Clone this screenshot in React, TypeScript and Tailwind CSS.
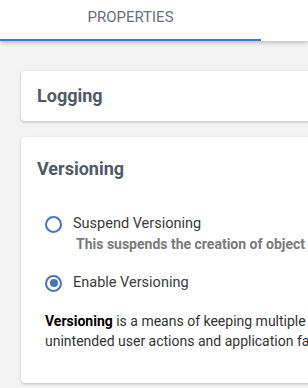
const options = [
  {
    label: 'Suspend Versioning',
    hint: 'This suspends the creation of object versions for all objects within the bucket.',
    checked: false,
  },
  {
    label: 'Enable Versioning',
    hint: '',
    checked: true,
  },
];

function Radio({ checked }: { checked: boolean }) {
  return (
    <span className="flex h-[17px] w-[17px] flex-shrink-0 items-center justify-center rounded-full border-2 border-[#4673c2]">
      {checked && <span className="h-[8px] w-[8px] rounded-full bg-[#4673c2]"></span>}
    </span>
  );
}

export default function App() {
  return (
    <div className="h-[388px] w-[308px] overflow-hidden bg-[#f3f3f3] font-['Roboto','Liberation_Sans',sans-serif]">
      <div className="relative z-10 flex h-[41px] w-full bg-white shadow-[0_2px_4px_rgba(0,0,0,0.22)]">
        <div className="w-[261px] border-b-2 border-[#4673c2] pt-[7px] text-center text-[15px] leading-5 text-[#6b7178]">
          PROPERTIES
        </div>
      </div>

      <div className="w-[560px] pl-[21px] pt-[30px]">
        <div className="h-[50px] rounded-[4px] bg-white px-4 pt-[13px] shadow-[0_1px_3px_rgba(0,0,0,0.22)]">
          <h3 className="text-[18px] font-bold leading-6 text-[#4f5a66]">Logging</h3>
        </div>

        <div className="mt-4 rounded-[4px] bg-white px-4 pb-8 pt-[20px] shadow-[0_1px_3px_rgba(0,0,0,0.22)]">
          <h3 className="text-[18px] font-bold leading-6 text-[#4f5a66]">Versioning</h3>

          <div className="mt-[33px] flex flex-col gap-[19px] pl-2">
            {options.map((opt) => (
              <div key={opt.label}>
                <div className="flex h-5 items-center gap-[11px]">
                  <Radio checked={opt.checked} />
                  <span className="text-[14.5px] leading-5 text-[#3b3b3b]">{opt.label}</span>
                </div>
                {opt.hint && (
                  <p className="whitespace-nowrap pl-[31px] text-[14px] font-bold leading-5 text-[#7a7a7a]">
                    {opt.hint}
                  </p>
                )}
              </div>
            ))}
          </div>

          <p className="mt-[18px] whitespace-nowrap pl-2 text-[14px] leading-5 text-[#333]">
            <span className="font-bold text-black">Versioning</span> is a means of keeping multiple variants of an object in the same bucket, protecting it from
            <br />
            unintended user actions and application failures.
          </p>
        </div>
      </div>
    </div>
  );
}
